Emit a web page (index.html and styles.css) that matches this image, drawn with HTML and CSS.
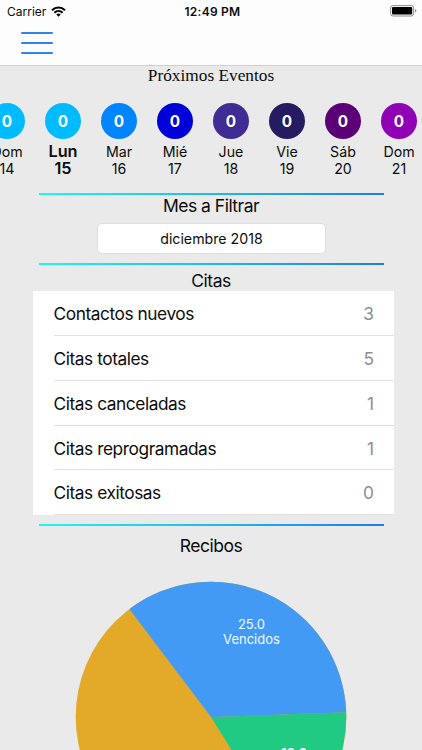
FILE: index.html
```
<!DOCTYPE html>
<html lang="es">
<head>
<meta charset="utf-8">
<title>Próximos Eventos</title>
<link rel="stylesheet" href="styles.css">
</head>
<body>
<header class="topbar">
  <div class="status">
    <div class="carrier"><span>Carrier</span>
      <svg class="wifi" width="15" height="11" viewBox="0 0 15 11" fill="none" stroke="#000" stroke-width="2"><path d="M1 4.2C4.8.5 10.200.5 14 4.200M3.400 6.700c2.400-2.200 5.800-2.200 8.200 0"/><path d="M7.500 10.700 5.300 8.400c1.300-1.100 3.100-1.100 4.400 0z" fill="#000" stroke="none"/></svg>
    </div>
    <span class="clock">12:49 PM</span>
    <svg class="battery" width="27" height="12" viewBox="0 0 27 12"><rect x=".6" y=".6" width="23" height="10.400" rx="2.400" fill="none" stroke="#8c8c8c"/><rect x="2" y="2" width="20.200" height="7.600" rx="1" fill="#000"/><path d="M25 4v3.600q1.400-.6 1.400-1.800T25 4" fill="#8c8c8c"/></svg>
  </div>
  <button class="menu" aria-label="Menú"><i></i><i></i><i></i></button>
</header>
<main>
  <h1>Próximos Eventos</h1>
  <section class="week">
    <div class="day"><b class="sky">0</b><span>Dom</span><span>14</span></div>
    <div class="day today"><b class="sky">0</b><span>Lun</span><span>15</span></div>
    <div class="day"><b class="blue">0</b><span>Mar</span><span>16</span></div>
    <div class="day"><b class="navy">0</b><span>Mié</span><span>17</span></div>
    <div class="day"><b class="indigo">0</b><span>Jue</span><span>18</span></div>
    <div class="day"><b class="night">0</b><span>Vie</span><span>19</span></div>
    <div class="day"><b class="plum">0</b><span>Sáb</span><span>20</span></div>
    <div class="day"><b class="violet">0</b><span>Dom</span><span>21</span></div>
  </section>
  <section class="filter">
    <h2>Mes a Filtrar</h2>
    <div class="month">diciembre 2018</div>
  </section>
  <section class="citas">
    <h2>Citas</h2>
    <ul>
      <li><span>Contactos nuevos</span><em>3</em></li>
      <li><span>Citas totales</span><em>5</em></li>
      <li><span>Citas canceladas</span><em>1</em></li>
      <li><span>Citas reprogramadas</span><em>1</em></li>
      <li><span>Citas exitosas</span><em>0</em></li>
    </ul>
  </section>
  <section class="recibos">
    <h2>Recibos</h2>
    <svg class="pie" width="272" height="272" viewBox="-136 -136 272 272">
      <circle r="135.300" fill="#e3aa29"/>
      <path d="M0 0 135.200-4.700A135.300 135.300 0 0 1 71.500 114.900z" fill="#20ca83"/>
      <path d="M0 0-81.600-107.900A135.300 135.300 0 0 1 135.200-4.700z" fill="#429af5"/>
      <text x="40.500" y="-88.500">25.0</text>
      <text x="40.500" y="-73">Vencidos</text>
      <text class="strong" x="83" y="41">10.0</text>
    </svg>
  </section>
</main>
</body>
</html>
```
FILE: styles.css
```
* { box-sizing: border-box; margin: 0; padding: 0; }
body {
  width: 422px;
  height: 750px;
  overflow: hidden;
  background: #eaeaea;
  color: #0b0b0b;
  font-family: Inter, "Liberation Sans", sans-serif;
}
.topbar { height: 66px; background: #fdfdfd; border-bottom: 1px solid #cfcfcf; }
.status {
  display: grid;
  grid-template-columns: 1fr auto 1fr;
  align-items: center;
  height: 22px;
  padding: 0 5px 0 7px;
  font-size: 12px;
}
.carrier { display: flex; align-items: center; gap: 5px; }
.clock { font-weight: 600; letter-spacing: .25px; padding-left: 1px; }
.battery { justify-self: end; }
.menu {
  display: flex;
  flex-direction: column;
  gap: 8px;
  width: 32px;
  margin: 10px 0 0 21px;
  border: 0;
  background: none;
}
.menu i { height: 2px; border-radius: 1px; background: #2d85ea; }
h1 {
  height: 37px;
  font: 17.300px/20px "Liberation Serif", serif;
  text-align: center;
}
h2 {
  font-size: 17.500px;
  font-weight: 400;
  letter-spacing: -.5px;
  line-height: 22px;
  text-align: center;
}
.week { display: flex; width: 448px; height: 90px; margin-left: -21px; }
.day {
  display: flex;
  flex-direction: column;
  align-items: center;
  width: 56px;
  font-size: 14.200px;
  line-height: 17.400px;
}
.day b {
  display: flex;
  align-items: center;
  justify-content: center;
  width: 36px;
  height: 36px;
  margin-bottom: 4px;
  padding-top: 1px;
  border-radius: 50%;
  color: #fff;
  font-size: 15.300px;
}
.today span { font-size: 16.300px; font-weight: 600; }
.sky { background: #00bbff; }
.blue { background: #0085ff; }
.navy { background: #0000d8; }
.indigo { background: #412b94; }
.night { background: #241b61; }
.plum { background: #5c0078; }
.violet { background: #9000b5; }
.filter::before, .citas::before, .recibos::before {
  content: "";
  display: block;
  width: 345px;
  height: 2px;
  margin-left: 39px;
  background: linear-gradient(90deg, #20f5f5, #1f7de6);
}
.filter { height: 70.400px; }
.month {
  width: 229px;
  height: 31px;
  margin: 6px 0 0 97px;
  border: 1px solid #dedede;
  border-radius: 5px;
  background: #fff;
  font-size: 14.200px;
  line-height: 29px;
  text-align: center;
}
.citas { height: 260.600px; }
.citas h2 { height: 25.600px; padding-top: 5px; }
.citas ul { width: 361px; margin-left: 33px; background: #fff; list-style: none; }
.citas li {
  display: flex;
  justify-content: space-between;
  height: 44.850px;
  margin-left: 20.500px;
  padding-right: 20px;
  border-bottom: 1px solid #e2e2e2;
  font-size: 17.300px;
  line-height: 45px;
}
.citas span { letter-spacing: -.43px; }
.citas em { color: #8e8e93; font-style: normal; }
.recibos h2 { padding-top: 9px; }
.pie { display: block; margin: 24px 0 0 75px; }
.pie text { fill: #f3f8ff; font-size: 13px; text-anchor: middle; }
.pie .strong { fill: #fff; font-weight: 600; }
```
